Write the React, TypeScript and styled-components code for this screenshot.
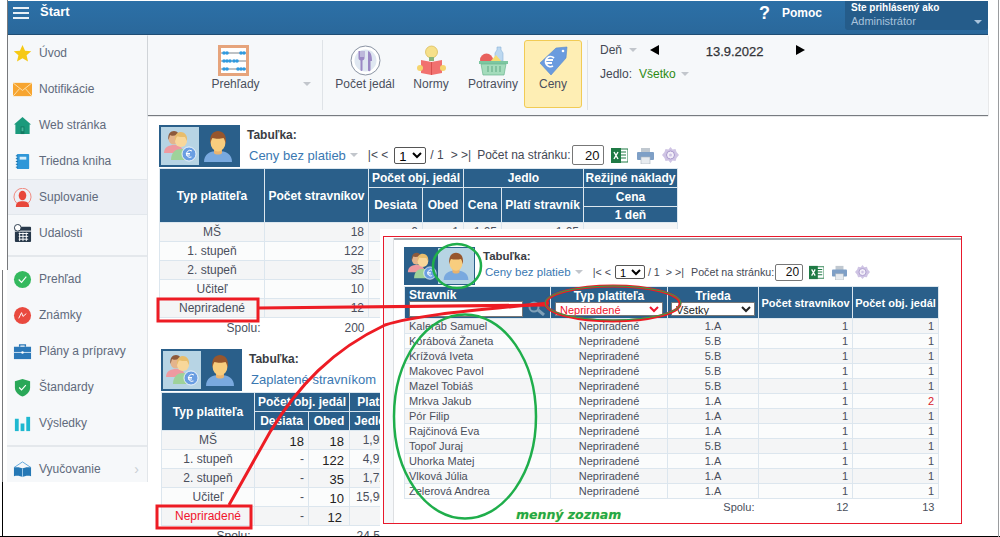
import React from "react";
import styled, {createGlobalStyle} from "styled-components";

const GlobalStyle = createGlobalStyle`
  html, body {
    margin: 0;
    padding: 0;
    background: #ffffff;
  }
  body {
    font-family: "Liberation Sans", Arial, sans-serif;
    font-size: 12px;
    color: #4a4f5c;
  }
`;

const Frame = styled.div`
  position: relative;
  width: 1000px;
  height: 537px;
  overflow: hidden;
  background: #ffffff;
`;

const Shell = styled.div`
  display: flex;
  flex-direction: column;
  width: 981px;
  margin: 1px 0 0 7px;
`;

const TopBar = styled.header`
  display: flex;
  align-items: flex-start;
  height: 33px;
  background: linear-gradient(#2c70a7, #2a689b);
  border-bottom: 1px solid #1f4d74;
  color: #ffffff;
`;

const Burger = styled.div`
  display: flex;
  flex-direction: column;
  justify-content: space-between;
  width: 16px;
  height: 12px;
  margin: 6px 11px 0 6px;

  span {
    height: 2px;
    background: #e8f0f6;
  }
`;

const StartLabel = styled.div`
  font-size: 13px;
  font-weight: bold;
  line-height: 22px;
`;

const HelpMark = styled.div`
  margin-left: auto;
  font-size: 18px;
  font-weight: bold;
  line-height: 24px;
`;

const HelpLabel = styled.div`
  margin: 0 23px 0 12px;
  font-size: 12px;
  font-weight: bold;
  line-height: 24px;
`;

const UserBox = styled.div`
  position: relative;
  width: 137px;
  height: 29px;
  padding-left: 6px;
  background: #255c8a;
  border-radius: 0 0 3px 3px;
`;

const UserTitle = styled.div`
  font-size: 10px;
  font-weight: bold;
  line-height: 13px;
`;

const UserName = styled.div`
  font-size: 11px;
  line-height: 15px;
  color: #a9c3dc;
`;

const Caret = styled.span<{$color?: string; $size?: number}>`
  display: inline-block;
  width: 0;
  height: 0;
  flex: none;
  border-left: ${p => p.$size || 4}px solid transparent;
  border-right: ${p => p.$size || 4}px solid transparent;
  border-top: ${p => p.$size || 4}px solid ${p => p.$color || "#c2c6cc"};
`;

const UserCaret = styled(Caret)`
  position: absolute;
  right: 6px;
  top: 19px;
`;

const Columns = styled.div`
  display: flex;
  align-items: flex-start;
`;

const Sidebar = styled.nav`
  flex: none;
  width: 140px;
  height: 447px;
  overflow: hidden;
  background: #f6f8fa;
  border-right: 1px solid #e2e6ea;
`;

const NavGroup = styled.div`
  padding: 0 0 4px;
  border-bottom: 2px solid #e4e8ec;
  margin-bottom: 4px;
`;

const NavItem = styled.div<{$active?: boolean}>`
  display: flex;
  align-items: center;
  gap: 7px;
  height: 36px;
  box-sizing: border-box;
  padding-left: 6px;
  font-size: 12px;
  color: #606a7c;
  background: ${p => (p.$active ? "#edf0f5" : "transparent")};
  border-top: 1px solid ${p => (p.$active ? "#e2e7ec" : "transparent")};
  border-bottom: 1px solid ${p => (p.$active ? "#e2e7ec" : "transparent")};

  svg {
    flex: none;
    width: 19px;
    height: 19px;
  }
`;

const NavChevron = styled.span`
  margin-left: auto;
  margin-right: 8px;
  font-size: 14px;
  color: #c9ced4;
`;

const Main = styled.main`
  flex: 1;
  min-width: 0;
`;

const Ribbon = styled.div`
  display: flex;
  height: 80px;
  background: #f6f8fa;
  box-shadow: 0 1px 1px 0 #777b80;
`;

const RibbonGroup = styled.div<{$width: number; $left: number}>`
  display: flex;
  box-sizing: border-box;
  width: ${p => p.$width}px;
  height: 70px;
  margin-top: 5px;
  padding-left: ${p => p.$left}px;
  border-right: 1px solid #dfe3e7;
`;

const RibbonButton = styled.div<{$width: number; $active?: boolean}>`
  display: flex;
  flex-direction: column;
  align-items: center;
  box-sizing: border-box;
  width: ${p => p.$width}px;
  height: 68px;
  padding-top: ${p => (p.$active ? 4 : 5)}px;
  margin-left: ${p => (p.$active ? 2 : 0)}px;
  font-size: 12px;
  color: #4a4f5c;
  background: ${p => (p.$active ? "#feeeb4" : "transparent")};
  border: ${p => (p.$active ? "1px solid #f1cb55" : "none")};
  border-radius: 3px;

  svg {
    width: 31px;
    height: 31px;
    flex: none;
  }
`;

const RibbonLabel = styled.div<{$offset?: number}>`
  margin: 1px 0 0 ${p => p.$offset || 0}px;
  line-height: 15px;
  white-space: nowrap;
`;

const RibbonCaret = styled(Caret)`
  margin-top: 42px;
`;

const DatePanel = styled.div`
  display: flex;
  flex-direction: column;
  padding: 7px 0 0 12px;
`;

const DateRow = styled.div`
  display: flex;
  align-items: center;
  height: 16px;
  margin-bottom: 8px;
  color: #444854;
`;

const MealValue = styled.span`
  margin: 0 5px 0 7px;
  color: #2c8a12;
`;

const Arrow = styled.span<{$dir: "left" | "right"; $left: number}>`
  width: 0;
  height: 0;
  margin-left: ${p => p.$left}px;
  border-top: 5px solid transparent;
  border-bottom: 5px solid transparent;
  border-${p => p.$dir === "left" ? "right" : "left"}: 9px solid #000000;
`;

const DateValue = styled.span`
  margin: 3px 0 0 47px;
  width: 90px;
  font-size: 13px;
  color: #333438;
  -webkit-text-stroke: 0.25px #333438;
`;

const Content = styled.div`
  padding: 10px 0 0 11px;
`;

const Section = styled.section<{$left?: number; $top?: number}>`
  margin: ${p => p.$top || 0}px 0 0 ${p => p.$left || 0}px;
`;

const ToolRow = styled.div<{$height: number}>`
  display: flex;
  height: ${p => p.$height}px;
  margin-bottom: 1px;
`;

const IconTabs = styled.div<{$small?: boolean}>`
  display: flex;
  flex: none;
  box-sizing: border-box;
  width: ${p => (p.$small ? 71 : 81)}px;
  padding: ${p => (p.$small ? 1 : 2)}px;
  background: #2a5f8a;
`;

const IconTab = styled.div<{$selected?: boolean; $small?: boolean}>`
  display: flex;
  align-items: center;
  justify-content: center;
  width: ${p => (p.$small ? (p.$selected ? 36 : 33) : 38)}px;
  background: ${p => (p.$selected ? "#b7d4e4" : "transparent")};

  svg {
    width: ${p => (p.$small ? 30 : 34)}px;
    height: ${p => (p.$small ? 30 : 34)}px;
  }
`;

const TitleBlock = styled.div<{$small?: boolean}>`
  display: flex;
  flex-direction: column;
  margin-left: ${p => (p.$small ? 8 : 7)}px;
  min-width: 0;
`;

const TitleLabel = styled.div<{$small?: boolean}>`
  margin-top: ${p => (p.$small ? 2 : 3)}px;
  font-size: ${p => (p.$small ? 11.5 : 12)}px;
  font-weight: bold;
  line-height: 15px;
  color: #3a3d44;
`;

const ViewRow = styled.div<{$small?: boolean}>`
  display: flex;
  align-items: center;
  height: 22px;
  margin-top: ${p => (p.$small ? -3 : 1)}px;
  padding-left: 2px;
  white-space: nowrap;
  font-size: ${p => (p.$small ? 10.7 : 12)}px;
  color: #444854;
`;

const ViewName = styled.span<{$small?: boolean}>`
  font-size: ${p => (p.$small ? 11.5 : 13)}px;
  color: #3a78b2;
  margin-right: 4px;
`;

const PagerText = styled.span<{$gap: number}>`
  margin-left: ${p => p.$gap}px;
`;

const PageSelect = styled.select<{$small?: boolean}>`
  box-sizing: border-box;
  width: ${p => (p.$small ? 30 : 32)}px;
  height: ${p => (p.$small ? 14 : 17)}px;
  margin-left: ${p => (p.$small ? 4 : 6)}px;
  padding: 0;
  font: ${p => (p.$small ? 11 : 13)}px "Liberation Sans", sans-serif;
  border: 1px solid #555555;
  border-radius: 2px;
  background: #ffffff;
`;

const PageInput = styled.input<{$small?: boolean}>`
  box-sizing: border-box;
  width: ${p => (p.$small ? 28 : 32)}px;
  height: ${p => (p.$small ? 17 : 20)}px;
  margin-left: 1px;
  padding: 0 3px 0 0;
  text-align: right;
  font: ${p => (p.$small ? 12 : 13)}px "Liberation Sans", sans-serif;
  color: #111111;
  border: 1px solid #777777;
  border-radius: 2px;
`;

const ToolIcon = styled.svg<{$gap: number; $small?: boolean}>`
  flex: none;
  width: ${p => (p.$small ? 15 : 17)}px;
  height: ${p => (p.$small ? 15 : 17)}px;
  margin-left: ${p => p.$gap}px;
`;

const DataTable = styled.table<{$width: number; $small?: boolean}>`
  table-layout: fixed;
  border-collapse: collapse;
  width: ${p => p.$width}px;
  font-size: 12px;

  ${p => p.$small && `
    th, td {
      font-size: 11px;
    }
  `}
`;

const Head = styled.th<{$height?: number; $align?: string}>`
  height: ${p => p.$height || 18}px;
  padding: 0;
  overflow: hidden;
  white-space: nowrap;
  text-align: ${p => p.$align || "center"};
  vertical-align: middle;
  font-size: 12px;
  font-weight: bold;
  color: #ffffff;
  background: #2a5f8a;
  border: 1px solid #dce7ef;
`;

const Row = styled.tr`
  &:nth-child(odd) td {
    background: #f4f5f6;
  }
  &:nth-child(even) td {
    background: #fbfcfc;
  }
`;

const Cell = styled.td<{$align?: string; $height: number; $color?: string; $big?: boolean; $pad?: number}>`
  box-sizing: border-box;
  height: ${p => p.$height}px;
  padding: ${p => (p.$big ? "3px" : "0")} ${p => p.$pad || 4}px 0 4px;
  overflow: hidden;
  white-space: nowrap;
  text-align: ${p => p.$align || "right"};
  font-size: ${p => (p.$big ? 13 : 12)}px;
  color: ${p => p.$color || (p.$big ? "#222222" : "#4a4f5c")};
  border: 1px solid #dce6ee;
`;

const TotalCell = styled.td<{$height: number}>`
  height: ${p => p.$height}px;
  padding: 0 4px;
  text-align: right;
  font-size: 12px;
  color: #4a4f5c;
`;

const PastedWindow = styled.div`
  position: absolute;
  left: 380px;
  top: 229px;
  width: 582px;
  height: 308px;
  box-sizing: border-box;
  padding: 7px 0 0 3px;
  background: #ffffff;
`;

const PastedShot = styled.div`
  position: relative;
  display: flex;
  height: 288px;
  box-sizing: border-box;
  border: 1px solid #e8192c;
`;

const ShotGutter = styled.div`
  flex: none;
  width: 9px;
  margin-top: 1px;
  background: #f6f8fa;
  border-right: 1px solid #dddfe2;
`;

const ShotBody = styled.div`
  flex: 1;
  margin-top: 1px;
  padding: 7px 0 0 10px;
  border-top: 2px solid #a8abb0;
`;

const FilterHead = styled.div<{$inset?: boolean}>`
  display: flex;
  flex-direction: column;
  align-items: ${p => (p.$inset ? "flex-start" : "center")};
  padding-left: ${p => (p.$inset ? 4 : 0)}px;
  font-size: 12px;
  line-height: 12px;
`;

const NameFilter = styled.div`
  display: flex;
  align-items: center;
  gap: 4px;
`;

const NameInput = styled.input`
  box-sizing: border-box;
  width: 114px;
  height: 16px;
  border: 1px solid #777777;
  padding: 0;
  background: #ffffff;
`;

const FilterSelect = styled.select<{$width: number; $color?: string}>`
  box-sizing: border-box;
  width: ${p => p.$width}px;
  height: 14px;
  padding: 0;
  font: 11px "Liberation Sans", sans-serif;
  color: ${p => p.$color || "#222222"};
  background: #ffffff;
  border: 1px solid #777777;
  border-radius: 1px;
`;

const ShotNote = styled.div`
  position: absolute;
  left: 132px;
  bottom: 0;
  font-family: "DejaVu Sans", sans-serif;
  font-size: 12.5px;
  font-weight: bold;
  font-style: italic;
  line-height: 16px;
  color: #1fa84a;
  text-shadow: 0 0 1px #d9e36a;
`;

const Markup = styled.svg`
  position: absolute;
  left: 0;
  top: 0;
  pointer-events: none;
`;

/* --- drawings --- */

function StarIcon() {
    return <svg viewBox="0 0 20 20"><path d="M10 1l2.700 6 6.500.6-4.900 4.300 1.500 6.400L10 14.900l-5.800 3.400 1.500-6.400L.8 7.600 7.300 7z" fill="#f6c915"/></svg>;
}

function MailIcon() {
    return <svg viewBox="0 0 20 20"><rect y="3" width="20" height="14" fill="#f7a530"/><path d="M0 3l10 8 10-8M0 17l7-8M20 17l-7-8" fill="none" stroke="#fde3b0" strokeWidth="1"/></svg>;
}

function HomeIcon() {
    return <svg viewBox="0 0 20 20"><path d="M10 1L1 9h1.500v10h15V9H19z" fill="#1b9a7c"/><rect x="8" y="11" width="4" height="8" fill="#127a62"/><rect x="9" y="12" width="2" height="4" fill="#45b59b"/></svg>;
}

function BookIcon() {
    return <svg viewBox="0 0 20 20"><rect x="4" y="2" width="13" height="16" rx="1" fill="#2f97d8"/><rect x="7" y="5" width="7" height="3" fill="#d6eefb"/><path d="M3 4h2M3 7h2M3 10h2M3 13h2M3 16h2" stroke="#1a6ea5" strokeWidth="1"/></svg>;
}

function SubstituteIcon() {
    return <svg viewBox="0 0 20 20"><path d="M4 16A9 9 0 1116 16" fill="none" stroke="#f0857a" strokeWidth="1"/><ellipse cx="10" cy="8" rx="4" ry="5" fill="#e8473b"/><path d="M3 20c0-5 3-6 7-6s7 1 7 6z" fill="#e8473b"/></svg>;
}

function CalendarIcon() {
    return <svg viewBox="0 0 20 20"><rect x="2" y="3" width="17" height="16" rx="1" fill="#27384a"/><rect x="2" y="7" width="17" height="1" fill="#ffffff"/><path d="M6 10h10M6 13h10M6 16h10M7 9v9M10.500 9v9M14 9v9" stroke="#ffffff" strokeWidth="1"/><circle cx="5" cy="4" r="3.500" fill="#ffffff" stroke="#27384a"/></svg>;
}

function CheckCircleIcon() {
    return <svg viewBox="0 0 20 20"><circle cx="10" cy="10" r="9" fill="#34b95e"/><path d="M6 10l3 3 5-6" fill="none" stroke="#ffffff" strokeWidth="1.200"/></svg>;
}

function GradeIcon() {
    return <svg viewBox="0 0 20 20"><circle cx="10" cy="10" r="9" fill="#e94a3f"/><path d="M6 13l3-6 1.500 4L14 8" fill="none" stroke="#ffffff" strokeWidth="1"/></svg>;
}

function CaseIcon() {
    return <svg viewBox="0 0 20 20"><path d="M7 5V3h6v2" fill="none" stroke="#2b78b8" strokeWidth="1.500"/><rect x="1" y="5" width="18" height="13" fill="#2b78b8"/><path d="M1 11h18" stroke="#cfe3f3" strokeWidth="1"/><circle cx="10" cy="11" r="1.300" fill="#ffffff"/></svg>;
}

function ShieldIcon() {
    return <svg viewBox="0 0 20 20"><path d="M10 1l8 2.500V10c0 5-4 8-8 9.500C6 18 2 15 2 10V3.500z" fill="#2aa858"/><path d="M6.500 10l2.500 2.500 4.500-5" fill="none" stroke="#ffffff" strokeWidth="1.200"/></svg>;
}

function BarsIcon() {
    return <svg viewBox="0 0 20 20"><rect x="2" y="5" width="4" height="13" fill="#1fb8d0"/><rect x="8" y="10" width="4" height="8" fill="#1fb8d0"/><rect x="14" y="3" width="4" height="15" fill="#1fb8d0"/></svg>;
}

function OpenBookIcon() {
    return <svg viewBox="0 0 20 20"><path d="M1 8l9-6 9 6" fill="none" stroke="#5fa5da" strokeWidth="1"/><path d="M1 8c4-1 7 0 9 1 2-1 5-2 9-1v9c-4-1-7 0-9 1-2-1-5-2-9-1z" fill="#2578b5"/><path d="M10 9v9" stroke="#9fcbec" strokeWidth="1"/></svg>;
}

function AbacusIcon() {
    const rows = [[5, 8, 22, 25], [5, 8, 11, 15, 18], [5, 8, 19, 22, 25]];
    return (
        <svg viewBox="0 0 31 31">
            <rect x="1.500" y="1.500" width="28" height="28" fill="#ffffff" stroke="#e6a47c" strokeWidth="3"/>
            {rows.map((beads, r) => (
                <g key={r}>
                    <path d={`M3 ${8 + r * 8}h25`} stroke="#46505a" strokeWidth=".7"/>
                    {beads.map(b => <circle key={b} cx={b + 1} cy={8 + r * 8} r="1.800" fill="#2f9ae0"/>)}
                </g>
            ))}
        </svg>
    );
}

function PlateIcon() {
    return (
        <svg viewBox="0 0 31 31">
            <circle cx="15.500" cy="15.500" r="14.500" fill="#ffffff" stroke="#8a93a3" strokeWidth="1"/>
            <circle cx="15.500" cy="15.500" r="11" fill="#dfe7f1"/>
            <path d="M8.500 6v7c0 1.500 1 2 2 2.500V25a1 1 0 002 0V15.500c1-.5 2-1 2-2.500V6h-1v6h-1V6h-1v6h-1V6z" fill="#9a88c4"/>
            <path d="M18 6c3 1 4 5 4 10h-1.500v9a1 1 0 01-2.500 0z" fill="#9a88c4"/>
        </svg>
    );
}

function NormsIcon() {
    return (
        <svg viewBox="0 0 31 31">
            <circle cx="15.500" cy="7" r="6" fill="#f6e08a" stroke="#d7b64e" strokeWidth=".7"/>
            <rect x="13" y="12" width="5" height="4" fill="#8bb67a"/>
            <path d="M5 15l10.500 2L26 15v13l-10.500 2L5 28z" fill="#f1716f"/>
            <path d="M15.500 17v13" stroke="#d8504e" strokeWidth="1"/>
            <circle cx="4" cy="23" r="3" fill="#f6d56e"/>
            <circle cx="27" cy="23" r="3" fill="#f6d56e"/>
        </svg>
    );
}

function BasketIcon() {
    return (
        <svg viewBox="0 0 31 31">
            <path d="M19 2h4v3l2 3v8h-8V8l2-3z" fill="#bcd8f0" stroke="#8cb4d8" strokeWidth=".6"/>
            <circle cx="8.500" cy="15" r="6.500" fill="#e8615c"/>
            <path d="M12 17l6-7 6 7z" fill="#f5dc70"/>
            <path d="M1 16h29v3H1z" fill="#7cc7a0"/>
            <path d="M3 19h25l-2 11H5z" fill="#a4dcbc" stroke="#6cb690" strokeWidth=".7"/>
            <path d="M10 21v6M14 21v6M18 21v6M22 21v6" stroke="#5fa782" strokeWidth="1"/>
        </svg>
    );
}

function PriceTagIcon() {
    return (
        <svg viewBox="0 0 31 31">
            <path d="M2 18L18 3l11-1-1 11-15 17z" fill="#6a9bde" stroke="#5688cc" strokeWidth=".6"/>
            <circle cx="25" cy="6" r="1.300" fill="#ffffff"/>
            <path d="M16 13a5 5 0 10-1 8M8 15h7M8 18h6" fill="none" stroke="#ffffff" strokeWidth="1.800"/>
        </svg>
    );
}

function GroupIcon() {
    return (
        <svg viewBox="0 0 34 34">
            <circle cx="11" cy="10" r="5.500" fill="#e4b48c"/>
            <path d="M5.500 11c-1-6 2-9 5.500-9s6 3 5 7l-2-3c-3 1-6 1-7 0z" fill="#8d5a3c"/>
            <path d="M1 24c0-6 5-8 10-8s9 2 9 8z" fill="#ee9aa0"/>
            <circle cx="18" cy="12" r="6" fill="#f8d79a"/>
            <path d="M12 12c-1-7 3-9 6-9s7 3 6 9l-2-4c-3 0-7 0-8-1z" fill="#e8bd6c"/>
            <path d="M8 31c0-8 5-11 10-11s9 3 9 11z" fill="#9ed29a"/>
            <circle cx="26" cy="25" r="7" fill="#6a9ee2" stroke="#ffffff" strokeWidth=".8"/>
            <path d="M29 22a3.500 3.500 0 10-.5 6M23 24.500h4M23 26h4" fill="none" stroke="#ffffff" strokeWidth="1"/>
        </svg>
    );
}

function PersonIcon() {
    return (
        <svg viewBox="0 0 34 34">
            <path d="M3 33c0-8 6-11 14-11s14 3 14 11z" fill="#79a9df"/>
            <path d="M13 20h8v4c-1 2-7 2-8 0z" fill="#eab36e"/>
            <ellipse cx="17" cy="13" rx="7.500" ry="9.500" fill="#f8cd7e"/>
            <path d="M9.500 15C8 5 13 2 17 2s9.500 3 7.500 13c-.5-3-1-5-2-6-3 1-8 1-11 0-1 1-1.500 3-2 6z" fill="#97562d"/>
        </svg>
    );
}

function ExcelIcon({gap, small}: {gap: number; small?: boolean}) {
    return (
        <ToolIcon viewBox="0 0 17 17" $gap={gap} $small={small}>
            <rect x="7" y="2" width="10" height="13" fill="#ffffff" stroke="#1f7a45"/>
            <path d="M9 5h6M9 8h6M9 11h6" stroke="#1f7a45" strokeWidth="1.200"/>
            <rect y="1" width="10" height="15" fill="#1f7a45"/>
            <path d="M3 5l4 7M7 5l-4 7" stroke="#ffffff" strokeWidth="1.400"/>
        </ToolIcon>
    );
}

function PrintIcon({gap, small}: {gap: number; small?: boolean}) {
    return (
        <ToolIcon viewBox="0 0 17 17" $gap={gap} $small={small}>
            <rect x="4" y="1" width="9" height="5" fill="#c0c8d0"/>
            <rect y="5" width="17" height="8" rx="1" fill="#7e9fc6"/>
            <rect x="4" y="10" width="9" height="7" fill="#e7ebef" stroke="#a8b2bc" strokeWidth=".6"/>
        </ToolIcon>
    );
}

function GearIcon({gap, small}: {gap: number; small?: boolean}) {
    return (
        <ToolIcon viewBox="0 0 17 17" $gap={gap} $small={small}>
            <path d="M8.500 0l2 2.500 3-.5 1 3 2.500 3-2.500 3-1 3-3-.5-2 2.500-2-2.500-3 .5-1-3L0 8l2.500-3 1-3 3 .5z" fill="#cfc4e4"/>
            <circle cx="8.500" cy="8" r="4" fill="#f2eef8" stroke="#a999cc" strokeWidth="1"/>
            <circle cx="8.500" cy="8" r="1.500" fill="#cfc4e4"/>
        </ToolIcon>
    );
}

function SearchIcon() {
    return (
        <svg width="19" height="15" viewBox="0 0 19 15">
            <circle cx="7" cy="6" r="4.500" fill="none" stroke="#7fa0b8" strokeWidth="2"/>
            <path d="M11 9l6 5" stroke="#7fa0b8" strokeWidth="3"/>
        </svg>
    );
}

/* --- data --- */

const navTop = [
    {label: "Úvod", icon: <StarIcon/>},
    {label: "Notifikácie", icon: <MailIcon/>},
    {label: "Web stránka", icon: <HomeIcon/>},
    {label: "Triedna kniha", icon: <BookIcon/>},
    {label: "Suplovanie", icon: <SubstituteIcon/>, active: true},
    {label: "Udalosti", icon: <CalendarIcon/>},
];

const navMiddle = [
    {label: "Prehľad", icon: <CheckCircleIcon/>},
    {label: "Známky", icon: <GradeIcon/>},
    {label: "Plány a prípravy", icon: <CaseIcon/>},
    {label: "Štandardy", icon: <ShieldIcon/>},
    {label: "Výsledky", icon: <BarsIcon/>},
];

const countRows = [
    ["MŠ", "18", "0", "1", "1,05", "1,05"],
    ["1. stupeň", "122", "", "", "", ""],
    ["2. stupeň", "35", "", "", "", ""],
    ["Učiteľ", "10", "", "", "", ""],
    ["Nepriradené", "12", "", "", "", ""],
];

const paidRows = [
    ["MŠ", "18", "18", "1,95"],
    ["1. stupeň", "-", "122", "4,92"],
    ["2. stupeň", "-", "35", "1,72"],
    ["Učiteľ", "-", "10", "15,90"],
    ["Nepriradené", "-", "12", ""],
];

const diners = [
    ["Kalerab Samuel", "1.A", 1],
    ["Korábová Žaneta", "5.B", 1],
    ["Krížová Iveta", "5.B", 1],
    ["Makovec Pavol", "5.B", 1],
    ["Mazel Tobiáš", "5.B", 1],
    ["Mrkva Jakub", "1.A", 2],
    ["Pór Filip", "1.A", 1],
    ["Rajčinová Eva", "1.A", 1],
    ["Topoľ Juraj", "5.B", 1],
    ["Uhorka Matej", "1.A", 1],
    ["Vlková Júlia", "1.A", 1],
    ["Zelerová Andrea", "1.A", 1],
] as const;

function TableTools({name, pager, small}: {name: string; pager?: boolean; small?: boolean}) {
    return (
        <ToolRow $height={small ? 38 : 42}>
            <IconTabs $small={small}>
                <IconTab $selected={!small} $small={small}><GroupIcon/></IconTab>
                <IconTab $selected={small} $small={small}><PersonIcon/></IconTab>
            </IconTabs>
            <TitleBlock $small={small}>
                <TitleLabel $small={small}>Tabuľka:</TitleLabel>
                <ViewRow $small={small}>
                    <ViewName $small={small}>{name}</ViewName>
                    <Caret $size={4}/>
                    {pager && (
                        <>
                            <PagerText $gap={10}>|&lt; &lt;</PagerText>
                            <PageSelect $small={small} defaultValue="1"><option>1</option></PageSelect>
                            <PagerText $gap={small ? 3 : 4}>/ 1</PagerText>
                            <PagerText $gap={small ? 6 : 7}>&gt; &gt;|</PagerText>
                            <PagerText $gap={small ? 7 : 6}>Počet na stránku:</PagerText>
                            <PageInput $small={small} defaultValue="20"/>
                            <ExcelIcon gap={small ? 6 : 7} small={small}/>
                            <PrintIcon gap={small ? 8 : 9} small={small}/>
                            <GearIcon gap={8} small={small}/>
                        </>
                    )}
                </ViewRow>
            </TitleBlock>
        </ToolRow>
    );
}

function App() {
    return (
        <Frame>
            <GlobalStyle/>
            <Shell>
                <TopBar>
                    <Burger><span/><span/><span/></Burger>
                    <StartLabel>Štart</StartLabel>
                    <HelpMark>?</HelpMark>
                    <HelpLabel>Pomoc</HelpLabel>
                    <UserBox>
                        <UserTitle>Ste prihlásený ako</UserTitle>
                        <UserName>Administrátor</UserName>
                        <UserCaret $color="#a9c3dc"/>
                    </UserBox>
                </TopBar>
                <Columns>
                    <Sidebar>
                        <NavGroup>
                            {navTop.map(item => (
                                <NavItem key={item.label} $active={item.active}>{item.icon}{item.label}</NavItem>
                            ))}
                        </NavGroup>
                        <NavGroup>
                            {navMiddle.map(item => (
                                <NavItem key={item.label}>{item.icon}{item.label}</NavItem>
                            ))}
                        </NavGroup>
                        <NavItem><OpenBookIcon/>Vyučovanie<NavChevron>›</NavChevron></NavItem>
                    </Sidebar>
                    <Main>
                        <Ribbon>
                            <RibbonGroup $width={175} $left={15}>
                                <RibbonButton $width={140}>
                                    <AbacusIcon/>
                                    <RibbonLabel $offset={5}>Prehľady</RibbonLabel>
                                </RibbonButton>
                                <RibbonCaret/>
                            </RibbonGroup>
                            <RibbonGroup $width={265} $left={9}>
                                <RibbonButton $width={66}><PlateIcon/><RibbonLabel>Počet jedál</RibbonLabel></RibbonButton>
                                <RibbonButton $width={66}><NormsIcon/><RibbonLabel>Normy</RibbonLabel></RibbonButton>
                                <RibbonButton $width={58}><BasketIcon/><RibbonLabel>Potraviny</RibbonLabel></RibbonButton>
                                <RibbonButton $width={58} $active><PriceTagIcon/><RibbonLabel>Ceny</RibbonLabel></RibbonButton>
                            </RibbonGroup>
                            <DatePanel>
                                <DateRow>
                                    Deň&nbsp;&nbsp;<Caret/>
                                    <Arrow $dir="left" $left={13}/>
                                    <DateValue>13.9.2022</DateValue>
                                    <Arrow $dir="right" $left={0}/>
                                </DateRow>
                                <DateRow>
                                    Jedlo:
                                    <MealValue>Všetko</MealValue>
                                    <Caret/>
                                </DateRow>
                            </DatePanel>
                        </Ribbon>
                        <Content>
                            <Section>
                                <TableTools name="Ceny bez platieb" pager/>
                                <DataTable $width={518}>
                                    <colgroup>
                                        <col width="105"/><col width="104"/><col width="54"/><col width="41"/>
                                        <col width="38"/><col width="82"/><col width="94"/>
                                    </colgroup>
                                    <thead>
                                        <tr>
                                            <Head rowSpan={3}>Typ platiteľa</Head>
                                            <Head rowSpan={3}>Počet stravníkov</Head>
                                            <Head colSpan={2}>Počet obj. jedál</Head>
                                            <Head colSpan={2}>Jedlo</Head>
                                            <Head>Režijné náklady</Head>
                                        </tr>
                                        <tr>
                                            <Head rowSpan={2}>Desiata</Head>
                                            <Head rowSpan={2}>Obed</Head>
                                            <Head rowSpan={2}>Cena</Head>
                                            <Head rowSpan={2}>Platí stravník</Head>
                                            <Head>Cena</Head>
                                        </tr>
                                        <tr><Head $height={15}>1 deň</Head></tr>
                                    </thead>
                                    <tbody>
                                        {countRows.map(r => (
                                            <Row key={r[0]}>
                                                <Cell $height={19} $align="center">{r[0]}</Cell>
                                                {r.slice(1).map((v, i) => <Cell $height={19} key={i}>{v}</Cell>)}
                                                <Cell $height={19}/>
                                            </Row>
                                        ))}
                                        <tr>
                                            <TotalCell $height={19}>Spolu:</TotalCell>
                                            <TotalCell $height={19}>200</TotalCell>
                                        </tr>
                                    </tbody>
                                </DataTable>
                            </Section>
                            <Section $left={2} $top={12}>
                                <TableTools name="Zaplatené stravníkom"/>
                                <DataTable $width={229}>
                                    <colgroup>
                                        <col width="93"/><col width="54"/><col width="41"/><col width="41"/>
                                    </colgroup>
                                    <thead>
                                        <tr>
                                            <Head rowSpan={2}>Typ platiteľa</Head>
                                            <Head colSpan={2}>Počet obj. jedál</Head>
                                            <Head>Platí</Head>
                                        </tr>
                                        <tr>
                                            <Head>Desiata</Head>
                                            <Head>Obed</Head>
                                            <Head>Jedlo</Head>
                                        </tr>
                                    </thead>
                                    <tbody>
                                        {paidRows.map(r => (
                                            <Row key={r[0]}>
                                                <Cell $height={19} $align="center" $color={r[0] === "Nepriradené" ? "#f0142d" : undefined}>{r[0]}</Cell>
                                                <Cell $height={19} $big={r[1] !== "-"}>{r[1]}</Cell>
                                                <Cell $height={19} $big $pad={r[0] === "Nepriradené" ? 7 : 5}>{r[2]}</Cell>
                                                <Cell $height={19}>{r[3]}</Cell>
                                            </Row>
                                        ))}
                                        <tr>
                                            <TotalCell $height={19}>Spolu:</TotalCell>
                                            <TotalCell $height={19}/>
                                            <TotalCell $height={19}/>
                                            <TotalCell $height={19}>24,56</TotalCell>
                                        </tr>
                                    </tbody>
                                </DataTable>
                            </Section>
                        </Content>
                    </Main>
                </Columns>
            </Shell>

            <PastedWindow>
                <PastedShot>
                    <ShotGutter/>
                    <ShotBody>
                        <TableTools name="Ceny bez platieb" pager small/>
                        <DataTable $width={534} $small>
                            <colgroup>
                                <col width="146"/><col width="117"/><col width="91"/><col width="94"/><col width="86"/>
                            </colgroup>
                            <thead>
                                <tr>
                                    <Head $height={31}>
                                        <FilterHead $inset>
                                            Stravník
                                            <NameFilter>
                                                <NameInput/>
                                                <SearchIcon/>
                                            </NameFilter>
                                        </FilterHead>
                                    </Head>
                                    <Head>
                                        <FilterHead>
                                            Typ platiteľa
                                            <FilterSelect $width={108} $color="#f0142d" defaultValue="Nepriradené"><option>Nepriradené</option></FilterSelect>
                                        </FilterHead>
                                    </Head>
                                    <Head>
                                        <FilterHead>
                                            Trieda
                                            <FilterSelect $width={84} defaultValue="Všetky"><option>Všetky</option></FilterSelect>
                                        </FilterHead>
                                    </Head>
                                    <Head>Počet stravníkov</Head>
                                    <Head>Počet obj. jedál</Head>
                                </tr>
                            </thead>
                            <tbody>
                                {diners.map(d => (
                                    <Row key={d[0]}>
                                        <Cell $height={15} $align="left">{d[0]}</Cell>
                                        <Cell $height={15} $align="center">Nepriradené</Cell>
                                        <Cell $height={15} $align="center">{d[1]}</Cell>
                                        <Cell $height={15}>1</Cell>
                                        <Cell $height={15} $color={d[2] === 2 ? "#d8202c" : undefined}>{d[2]}</Cell>
                                    </Row>
                                ))}
                                <tr>
                                    <TotalCell $height={16}/>
                                    <TotalCell $height={16}/>
                                    <TotalCell $height={16}>Spolu:</TotalCell>
                                    <TotalCell $height={16}>12</TotalCell>
                                    <TotalCell $height={16}>13</TotalCell>
                                </tr>
                            </tbody>
                        </DataTable>
                    </ShotBody>
                    <ShotNote>menný zoznam</ShotNote>
                </PastedShot>
            </PastedWindow>

            <Markup width="1000" height="537" viewBox="0 0 1000 537">
                <path d="M7.500 0v270" stroke="#77797c" strokeWidth="1"/>
                <path d="M2.500 270v214" stroke="#77797c" strokeWidth="1"/>
                <path d="M2.500 482v54" stroke="#000000" strokeWidth="1"/>
                <path d="M0 536.500h1000" stroke="#000000" strokeWidth="1"/>
                <path d="M998.500 0v537" stroke="#9a9c9f" strokeWidth="1"/>
                <g fill="none" stroke="#ed1c24" strokeWidth="3">
                    <rect x="158" y="299" width="100" height="22"/>
                    <rect x="157" y="506" width="94" height="22"/>
                    <path d="M258 308L546 305"/>
                    <path d="M229 505L270 432C298 386 332 350 385 325C420 314 480 310 549 303"/>
                    <ellipse cx="613" cy="303.500" rx="67" ry="17.500"/>
                </g>
                <g fill="none" stroke="#1fae4b">
                    <ellipse cx="457" cy="266" rx="24" ry="22" strokeWidth="2.500"/>
                    <ellipse cx="465" cy="416.500" rx="71" ry="102" strokeWidth="2.500"/>
                    <ellipse cx="613" cy="303" rx="68" ry="17" strokeWidth="1"/>
                </g>
            </Markup>
        </Frame>
    );
}

export default App;
